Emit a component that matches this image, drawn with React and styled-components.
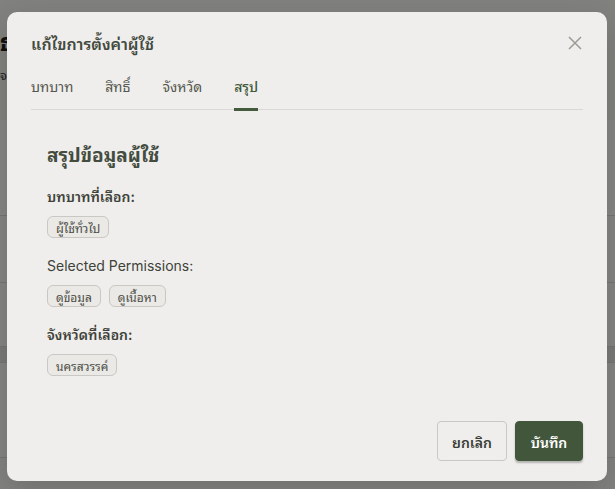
import React from "react";
import styled, { createGlobalStyle } from "styled-components";

const Global = createGlobalStyle`
  html, body { margin: 0; padding: 0; }
  body {
    width: 615px; height: 489px; overflow: hidden;
    font-family: Inter, "Noto Sans Thai Looped", sans-serif;
    background: #f6f5f1;
  }
`;

const Page = styled.div`
  position: relative;
  width: 615px;
  height: 489px;
  overflow: hidden;
  background: #f6f5f1;
`;

const PageHeader = styled.div`
  height: 120px;
  padding: 28px 0 0 0;
  box-sizing: border-box;
  background: #f4f3ee;
`;

const PageTitle = styled.h1`
  margin: 0;
  font-size: 24px;
  line-height: 30px;
  font-weight: 700;
  color: #1f211d;
  white-space: nowrap;
`;

const PageSub = styled.p`
  margin: 6px 0 0 0;
  font-size: 13px;
  color: #3a3a36;
  white-space: nowrap;
`;

const Row = styled.div`
  height: ${(p) => p.h}px;
  border-bottom: 1px solid #dcdcd6;
  background: ${(p) => p.bg || "#fafaf8"};
  box-sizing: border-box;
`;

const Overlay = styled.div`
  position: absolute;
  inset: 0;
  background: rgba(0, 0, 0, 0.47);
`;

const Dialog = styled.div`
  position: absolute;
  left: 7px;
  top: 12px;
  width: 600px;
  height: 469px;
  box-sizing: border-box;
  background: #efeeec;
  border-radius: 10px;
  padding: 20px 24px 20px 24px;
  display: flex;
  flex-direction: column;
  box-shadow: 0 10px 30px rgba(0, 0, 0, 0.15);
`;

const Header = styled.div`
  display: flex;
  align-items: center;
  justify-content: space-between;
`;

const Title = styled.h2`
  margin: 0;
  font-size: 16px;
  line-height: 24px;
  font-weight: 600;
  color: #434a3e;
`;

const Close = styled.button`
  border: 0;
  background: none;
  padding: 0;
  width: 16px;
  height: 16px;
  color: #9a9a96;
  cursor: pointer;
`;

const Tabs = styled.div`
  display: flex;
  gap: 32px;
  margin-top: 21px;
  border-bottom: 1px solid #d9d8d4;
`;

const Tab = styled.div`
  font-size: 14px;
  line-height: 20px;
  padding-bottom: 11px;
  color: ${(p) => (p.active ? "#3f5a39" : "#55574f")};
  font-weight: ${(p) => (p.active ? 500 : 400)};
  border-bottom: 3px solid ${(p) => (p.active ? "#445b3e" : "transparent")};
  margin-bottom: -2px;
`;

const Content = styled.div`
  flex: 1;
  padding: 33px 16px 0 16px;
`;

const Heading = styled.h3`
  margin: 0;
  font-size: 19px;
  line-height: 26px;
  font-weight: 700;
  color: #434c3e;
`;

const Label = styled.div`
  margin-top: ${(p) => p.mt || 14}px;
  font-size: 14px;
  line-height: 20px;
  font-weight: ${(p) => (p.bold ? 600 : 400)};
  color: #3e4239;
`;

const Chips = styled.div`
  display: flex;
  gap: 8px;
  margin-top: 9px;
`;

const Chip = styled.span`
  display: inline-flex;
  align-items: center;
  height: 22px;
  box-sizing: border-box;
  padding: 0 8px;
  border: 1px solid #c9c8c4;
  border-radius: 6px;
  background: #eae9e5;
  font-size: 12px;
  color: #4a4c46;
`;

const Footer = styled.div`
  display: flex;
  justify-content: flex-end;
  gap: 8px;
`;

const Button = styled.button`
  height: 40px;
  min-width: 68px;
  padding: 0 14px;
  border-radius: 4px;
  font-family: inherit;
  font-size: 14px;
  font-weight: 600;
  border: 1px solid ${(p) => (p.primary ? "#42563c" : "#c9c8c4")};
  background: ${(p) => (p.primary ? "#42563c" : "transparent")};
  color: ${(p) => (p.primary ? "#ffffff" : "#3a3d36")};
  box-shadow: ${(p) => (p.primary ? "0 2px 2px rgba(0,0,0,0.25)" : "none")};
`;

export default function App() {
  return (
    <Page>
      <Global />
      <PageHeader>
        <PageTitle>ธ</PageTitle>
        <PageSub>จ</PageSub>
      </PageHeader>
      <Row h={96} bg="#fbfbf9" />
      <Row h={67} />
      <Row h={64} />
      <Row h={16} bg="#e5e5e0" />
      <Row h={95} />
      <Overlay />
      <Dialog>
        <Header>
          <Title>แก้ไขการตั้งค่าผู้ใช้</Title>
          <Close aria-label="close">
            <svg width="14" height="14" viewBox="0 0 14 14" fill="none" stroke="currentColor" strokeWidth="1.5">
              <path d="M1 1L13 13M13 1L1 13" />
            </svg>
          </Close>
        </Header>
        <Tabs>
          <Tab>บทบาท</Tab>
          <Tab>สิทธิ์</Tab>
          <Tab>จังหวัด</Tab>
          <Tab active>สรุป</Tab>
        </Tabs>
        <Content>
          <Heading>สรุปข้อมูลผู้ใช้</Heading>
          <Label bold mt={18}>บทบาทที่เลือก:</Label>
          <Chips>
            <Chip>ผู้ใช้ทั่วไป</Chip>
          </Chips>
          <Label mt={18}>Selected Permissions:</Label>
          <Chips>
            <Chip>ดูข้อมูล</Chip>
            <Chip>ดูเนื้อหา</Chip>
          </Chips>
          <Label bold mt={18}>จังหวัดที่เลือก:</Label>
          <Chips>
            <Chip>นครสวรรค์</Chip>
          </Chips>
        </Content>
        <Footer>
          <Button>ยกเลิก</Button>
          <Button primary>บันทึก</Button>
        </Footer>
      </Dialog>
    </Page>
  );
}
